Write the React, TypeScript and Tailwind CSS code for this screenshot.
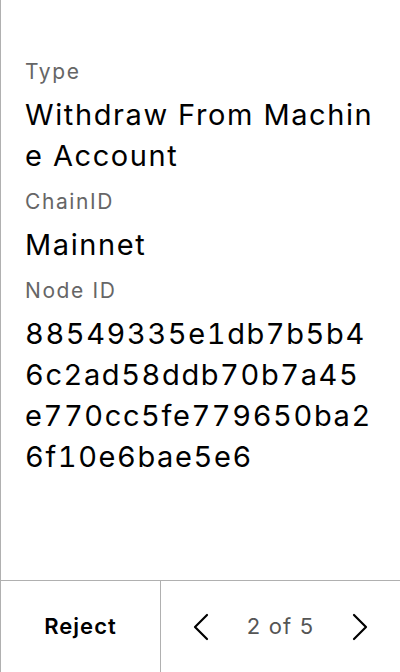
import React from 'react';

const fields = [
    { label: 'Type', value: 'Withdraw From Machine Account' },
    { label: 'ChainID', value: 'Mainnet' },
    { label: 'Node ID', value: '88549335e1db7b5b46c2ad58ddb70b7a45e770cc5fe779650ba26f10e6bae5e6' },
];

const Chevron: React.FC<{ dir: 'left' | 'right' }> = ({ dir }) => (
    <svg width="16" height="28" viewBox="0 0 16 28" fill="none" stroke="#000" strokeWidth="2.2" strokeLinecap="round" strokeLinejoin="round">
        {dir === 'left' ? <polyline points="14,2 2,14 14,26" /> : <polyline points="2,2 14,14 2,26" />}
    </svg>
);

export default function App() {
    return (
        <div className="w-[400px] h-[672px] flex flex-col bg-white border-l border-[#b0b0b0] font-['Inter',sans-serif]">
            <div className="flex-1 px-6 pt-[58px]">
                {fields.map((f, i) => (
                    <div key={f.label} className={i > 0 ? 'mt-3' : ''}>
                        <p className="text-[21px] leading-[28px] tracking-[1.6px] text-[#666]">{f.label}</p>
                        <p className="mt-2 text-[29px] leading-[41px] tracking-[1.6px] tabular-nums text-black break-all">{f.value}</p>
                    </div>
                ))}
            </div>
            <div className="h-[92px] flex border-t border-[#b0b0b0]">
                <button className="w-[160px] flex items-center justify-center text-[22px] tracking-[1px] font-semibold text-black border-r border-[#b0b0b0]">
                    Reject
                </button>
                <div className="flex-1 flex items-center justify-between px-8">
                    <Chevron dir="left" />
                    <span className="text-[22px] tracking-[1.2px] text-[#555]">2 of 5</span>
                    <Chevron dir="right" />
                </div>
            </div>
        </div>
    );
}
